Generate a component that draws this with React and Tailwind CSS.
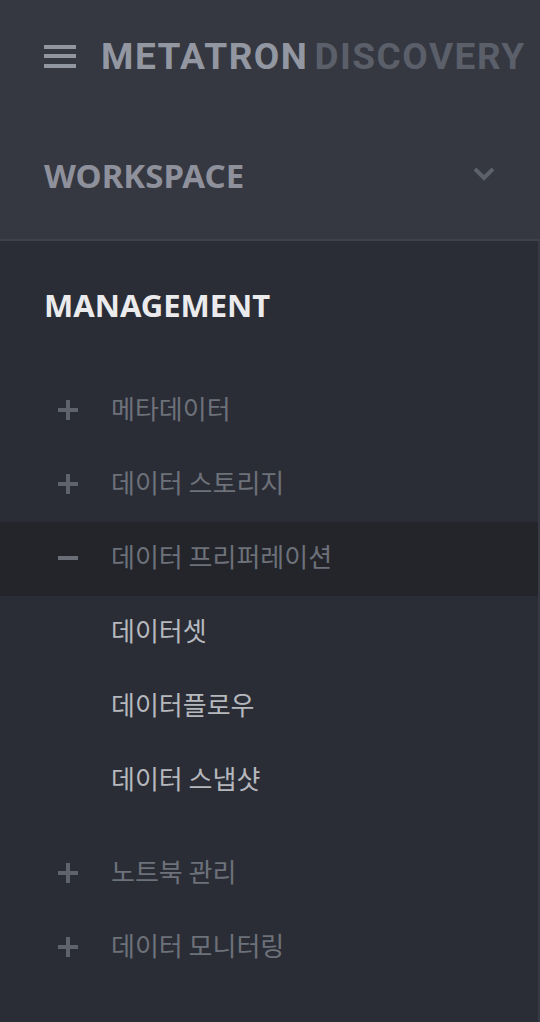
import React from 'react'

const PlusIcon = () => (
    <svg width="20" height="20" viewBox="0 0 20 20" className="shrink-0 -mt-[3px]">
        <rect x="8" y="0" width="4" height="20" fill="#5f636c" />
        <rect x="0" y="8" width="20" height="4" fill="#5f636c" />
    </svg>
)

const MinusIcon = () => (
    <svg width="20" height="20" viewBox="0 0 20 20" className="shrink-0 -mt-[3px]">
        <rect x="0" y="8" width="20" height="4" fill="#6a6e77" />
    </svg>
)

const MenuRow = ({ label, open, active }) => (
    <div className={`${active ? 'bg-[#23252b]' : ''} flex items-center h-[74px] pl-[58px] gap-[33px]`}>
        {open ? <MinusIcon /> : <PlusIcon />}
        <p className="text-[26px] leading-none -mt-[6px] text-[#6d717a] font-['Noto_Sans_CJK_KR',sans-serif]">{label}</p>
    </div>
)

const SubRow = ({ label }) => (
    <div className="flex items-center h-[74px] pl-[111px]">
        <p className="text-[26px] leading-none -mt-[6px] text-[#b6b8be] font-['Noto_Sans_CJK_KR',sans-serif]">{label}</p>
    </div>
)

const App = () => {
    return (
        <div className="w-[540px] h-[1022px] bg-[#2a2d35] overflow-hidden font-['Noto_Sans',sans-serif]">
            {/* top header */}
            <div className="bg-[#353841] h-[241px] border-b-2 border-[#3e414a]">
                <div className="flex items-center h-[112px] pl-[44px] gap-[25px]">
                    <div className="flex flex-col gap-[5.5px] w-[32px]">
                        <span className="block h-[4px] bg-[#9196a0]"></span>
                        <span className="block h-[4px] bg-[#9196a0]"></span>
                        <span className="block h-[4px] bg-[#9196a0]"></span>
                    </div>
                    <p className="text-[37px] font-bold tracking-[1.5px] leading-none font-['Roboto',sans-serif]">
                        <span className="text-[#9297a1]">METATRON</span>
                        <span className="text-[#5b5f6a] ml-[6px]">DISCOVERY</span>
                    </p>
                </div>
                <div className="flex items-center justify-between h-[127px] pl-[44px] pr-[45px]">
                    <p className="text-[33px] font-bold text-[#8e919b]">WORKSPACE</p>
                    <svg width="22" height="14" viewBox="0 0 22 14" className="-mt-[3px]">
                        <polyline points="2,2 11,11 20,2" fill="none" stroke="#5d616b" strokeWidth="4" />
                    </svg>
                </div>
            </div>

            {/* management */}
            <div className="h-full border-r-2 border-[#363941]">
                <div className="flex items-center h-[133px] pl-[44px]">
                    <p className="text-[31px] font-bold text-[#ebebed] -mt-[4px]">MANAGEMENT</p>
                </div>
                <MenuRow label="메타데이터" />
                <MenuRow label="데이터 스토리지" />
                <MenuRow label="데이터 프리퍼레이션" open active />
                <div className="pb-[19px]">
                    <SubRow label="데이터셋" />
                    <SubRow label="데이터플로우" />
                    <SubRow label="데이터 스냅샷" />
                </div>
                <MenuRow label="노트북 관리" />
                <MenuRow label="데이터 모니터링" />
            </div>
        </div>
    )
}

export default App
